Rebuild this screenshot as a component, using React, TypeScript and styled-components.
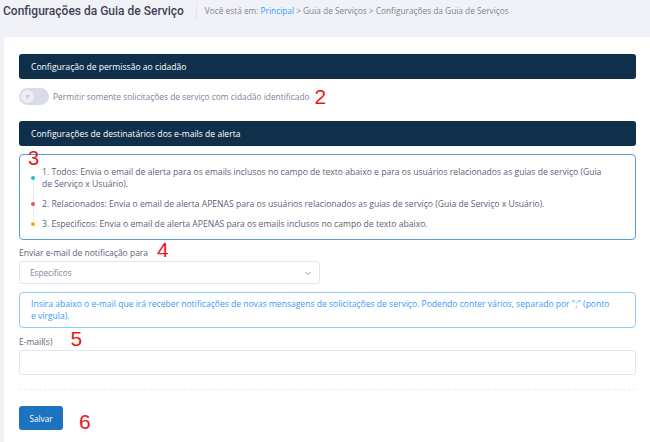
import React from "react";
import styled, { createGlobalStyle } from "styled-components";

const Global = createGlobalStyle`
  html, body { margin: 0; padding: 0; background: #f1f2f7; }
  body { font-family: "Open Sans", "Liberation Sans", sans-serif; }
  * { box-sizing: border-box; }
`;

const Page = styled.div`
  width: 650px;
  height: 442px;
  overflow: hidden;
  display: flex;
  flex-direction: column;
  background: #f1f2f7;
`;

const Header = styled.header`
  height: 37px;
  display: flex;
  align-items: flex-start;
  padding: 2px 0 0 3px;
`;

const Title = styled.h1`
  margin: 0;
  font-family: Roboto, "Liberation Sans", sans-serif;
  font-weight: 500;
  font-size: 12px;
  line-height: 18px;
  color: #3f4254;
`;

const Divider = styled.span`
  width: 1px;
  height: 18px;
  background: #e4e5ec;
  margin: 0 8px 0 12px;
`;

const Crumbs = styled.nav`
  font-size: 8.3px;
  line-height: 18px;
  color: #7e8299;
`;

const CrumbLink = styled.span`
  color: #3699ff;
`;

const Card = styled.main`
  flex: 1;
  margin-left: 4px;
  background: #fff;
  padding: 17px 14px 0 15px;
  display: flex;
  flex-direction: column;
`;

const SectionBar = styled.div<{ $mt?: number }>`
  height: 25px;
  margin-top: ${(p) => p.$mt ?? 0}px;
  background: #0f2f4b;
  border-radius: 3px;
  color: #fff;
  font-size: 8.6px;
  display: flex;
  align-items: center;
  padding-left: 12px;
`;

const ToggleRow = styled.div`
  margin-top: 9px;
  height: 17px;
  display: flex;
  align-items: center;
  gap: 4px;
`;

const Switch = styled.span`
  width: 30px;
  height: 17px;
  border-radius: 9px;
  background: #d9dbe9;
  position: relative;
  flex: none;
`;

const Knob = styled.span`
  position: absolute;
  left: 2px;
  top: 2px;
  width: 13px;
  height: 13px;
  border-radius: 50%;
  background: #eceef7;
  color: #a1a5b7;
  font-size: 7px;
  line-height: 13px;
  text-align: center;
`;

const Muted = styled.span`
  font-size: 8.4px;
  color: #7e8299;
`;

const Note = styled.span<{ $ml?: number }>`
  font-family: "Liberation Sans", Arial, sans-serif;
  color: #e8161a;
  font-size: 21px;
  line-height: 16px;
  margin-left: ${(p) => p.$ml ?? 4}px;
`;

const FloatNote = styled(Note)`
  position: absolute;
  left: 8px;
  top: -5px;
  margin: 0;
  font-size: 20px;
  line-height: 16px;
`;

const Alert = styled.div<{ $tone: "dark" | "light" }>`
  position: relative;
  margin-top: 8px;
  border: 1px solid ${(p) => (p.$tone === "dark" ? "#5b9bd8" : "#93c9fb")};
  border-radius: 4px;
`;

const Timeline = styled.ul`
  position: relative;
  list-style: none;
  margin: 0;
  padding: 11px 30px 9px 11px;
  display: flex;
  flex-direction: column;
  gap: 8px;
  &::before {
    content: "";
    position: absolute;
    left: 13px;
    top: 22px;
    bottom: 18px;
    width: 1px;
    background: #ebedf3;
  }
`;

const Item = styled.li<{ $dot: string }>`
  position: relative;
  padding-left: 11px;
  font-size: 8.6px;
  line-height: 12px;
  color: #5e6278;
  &::before {
    content: "";
    position: absolute;
    left: 0;
    top: 50%;
    margin-top: -2px;
    width: 4px;
    height: 4px;
    border-radius: 50%;
    background: ${(p) => p.$dot};
  }
`;

const FieldLabel = styled.label<{ $mt: number }>`
  display: flex;
  align-items: flex-end;
  margin-top: ${(p) => p.$mt}px;
  height: 14px;
  font-size: 8.5px;
  color: #5e6278;
`;

const Select = styled.div`
  margin-top: 3px;
  width: 301px;
  height: 23px;
  border: 1px solid #e4e6ef;
  border-radius: 3px;
  display: flex;
  align-items: center;
  justify-content: space-between;
  padding: 0 7px 0 10px;
  font-size: 8.2px;
  color: #7e8299;
`;

const InfoText = styled.p`
  margin: 0;
  padding: 5px 20px 5px 11px;
  font-size: 8.55px;
  line-height: 12px;
  color: #3699ff;
`;

const Input = styled.div`
  margin-top: 3px;
  height: 25px;
  border: 1px solid #e4e6ef;
  border-radius: 3px;
`;

const Separator = styled.hr`
  margin: 14px 0 0;
  border: 0;
  border-top: 1px dashed #ebedf3;
`;

const Footer = styled.div`
  margin-top: 16px;
  display: flex;
  align-items: flex-end;
`;

const Button = styled.button`
  width: 44px;
  height: 24px;
  border: 0;
  border-radius: 3px;
  background: #1c73bf;
  color: #fff;
  font-family: inherit;
  font-size: 8.2px;
  font-weight: 500;
  padding: 0;
`;

export default function App() {
  return (
    <>
      <Global />
      <Page>
        <Header>
          <Title>Configurações da Guia de Serviço</Title>
          <Divider />
          <Crumbs>
            Você está em: <CrumbLink>Principal</CrumbLink> &gt; Guia de Serviços &gt; Configurações da Guia de Serviços
          </Crumbs>
        </Header>
        <Card>
          <SectionBar>Configuração de permissão ao cidadão</SectionBar>
          <ToggleRow>
            <Switch>
              <Knob>×</Knob>
            </Switch>
            <Muted>Permitir somente solicitações de serviço com cidadão identificado</Muted>
            <Note $ml={1}>2</Note>
          </ToggleRow>
          <SectionBar $mt={16}>Configurações de destinatários dos e-mails de alerta</SectionBar>
          <Alert $tone="dark">
            <FloatNote>3</FloatNote>
            <Timeline>
              <Item $dot="#1bc5bd">
                1. Todos: Envia o email de alerta para os emails inclusos no campo de texto abaixo e para os usuários relacionados as guias de serviço (Guia de Serviço x Usuário).
              </Item>
              <Item $dot="#f64e60">
                2. Relacionados: Envia o email de alerta APENAS para os usuários relacionados as guias de serviço (Guia de Serviço x Usuário).
              </Item>
              <Item $dot="#ffa800">
                3. Especificos: Envia o email de alerta APENAS para os emails inclusos no campo de texto abaixo.
              </Item>
            </Timeline>
          </Alert>
          <FieldLabel $mt={4}>
            Enviar e-mail de notificação para <Note $ml={9}>4</Note>
          </FieldLabel>
          <Select>
            <span>Especificos</span>
            <svg width="8" height="8" viewBox="0 0 8 8" fill="none" stroke="#7e8299" strokeWidth="0.8">
              <path d="M1.5 3l2.5 2.5L6.5 3" />
            </svg>
          </Select>
          <Alert $tone="light">
            <InfoText>
              Insira abaixo o e-mail que irá receber notificações de novas mensagens de solicitações de serviço. Podendo conter vários, separado por ";" (ponto e vírgula).
            </InfoText>
          </Alert>
          <FieldLabel $mt={5}>
            E-mail(s) <Note $ml={18}>5</Note>
          </FieldLabel>
          <Input />
          <Separator />
          <Footer>
            <Button>Salvar</Button>
            <Note $ml={16}>6</Note>
          </Footer>
        </Card>
      </Page>
    </>
  );
}
